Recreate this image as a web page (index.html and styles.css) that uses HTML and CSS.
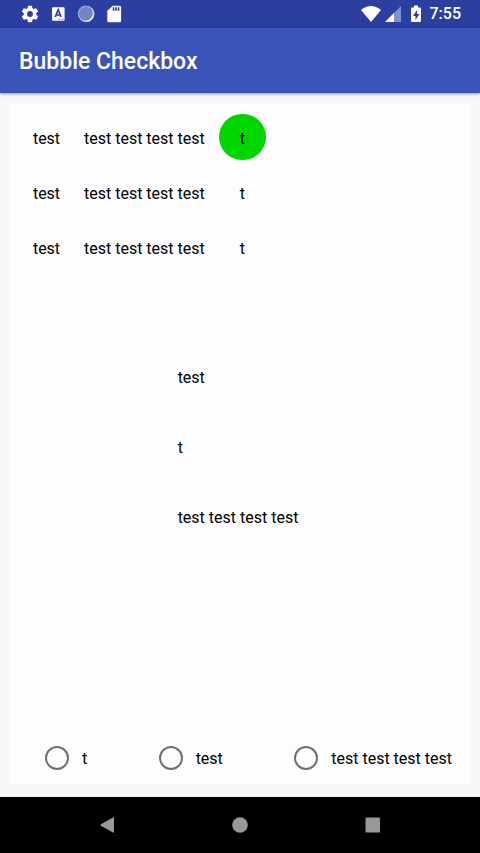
FILE: index.html
```html
<!DOCTYPE html>
<html lang="en">
<head>
<meta charset="utf-8">
<meta name="viewport" content="width=device-width, initial-scale=1">
<title>Bubble Checkbox</title>
<link rel="stylesheet" href="styles.css">
</head>
<body>
<div class="status">
  <div class="status-left">
    <svg width="20" height="20" viewBox="0 0 24 24" fill="#fff" aria-hidden="true"><path d="M19.43 12.98c.04-.32.07-.64.07-.98s-.03-.66-.07-.98l2.11-1.65c.19-.15.24-.42.12-.64l-2-3.46c-.12-.22-.39-.3-.61-.22l-2.49 1c-.52-.4-1.08-.73-1.69-.98l-.38-2.65C14.46 2.18 14.25 2 14 2h-4c-.25 0-.46.18-.49.42l-.38 2.65c-.61.25-1.17.59-1.69.98l-2.49-1c-.23-.09-.49 0-.61.22l-2 3.46c-.13.22-.07.49.12.64l2.11 1.65c-.04.32-.07.65-.07.98s.03.66.07.98l-2.11 1.65c-.19.15-.24.42-.12.64l2 3.46c.12.22.39.3.61.22l2.49-1c.52.4 1.08.73 1.69.98l.38 2.65c.03.24.24.42.49.42h4c.25 0 .46-.18.49-.42l.38-2.65c.61-.25 1.17-.59 1.69-.98l2.49 1c.23.09.49 0 .61-.22l2-3.46c.12-.22.07-.49-.12-.64l-2.11-1.65zM12 15.5a3.5 3.5 0 1 1 0-7 3.5 3.5 0 0 1 0 7z"/></svg>
    <svg width="20" height="20" viewBox="0 0 20 20" aria-hidden="true"><rect x="4" y="3.200" width="12.600" height="13.600" rx="1" fill="#fff"/><path d="M7.300 13l2.900-7.200L13.100 13M8.400 11h3.600" fill="none" stroke="#2c3e9f" stroke-width="1.700"/><path d="M10.500 15.300h5" stroke="#2c3e9f" stroke-width=".8" stroke-dasharray="1 1"/></svg>
    <svg width="20" height="20" viewBox="0 0 20 20" aria-hidden="true"><circle cx="10.300" cy="10" r="8" fill="#fff"/><circle cx="9.300" cy="9.200" r="7.600" fill="#7583c5"/><circle cx="10.300" cy="10" r="7.700" fill="none" stroke="#a9b2dd" stroke-width=".8"/></svg>
    <svg width="20" height="20" viewBox="0 0 24 24" fill="#fff" aria-hidden="true"><path d="M18.500 2h-8L4 8v12c0 1.100.9 2 2 2h12.500c1.100 0 2-.9 2-2V4c0-1.100-.9-2-2-2zm-6 6h-2V4h2v4zm3 0h-2V4h2v4zm3 0h-2V4h2v4z"/></svg>
  </div>
  <div class="status-right">
    <svg width="22" height="20" viewBox="0 0 22 20" fill="#fff" aria-hidden="true"><path d="M11 18L1 6Q11-2 21 6z"/></svg>
    <svg width="18" height="20" viewBox="0 0 18 20" aria-hidden="true"><path d="M1 18L17 2v16z" fill="#8390cb"/><path d="M1 18l9-9v9z" fill="#fff"/></svg>
    <svg class="battery" width="12" height="20" viewBox="0 0 12 20" aria-hidden="true"><path d="M4 1.500h4v2h2q1 0 1 1v12.500q0 1-1 1H2q-1 0-1-1V4.500q0-1 1-1h2z" fill="#fff"/><path d="M7 6l-4 6h2.500v4l4-6H7z" fill="#2c3e9f"/></svg>
    <span>7:55</span>
  </div>
</div>
<header class="appbar"><h1>Bubble Checkbox</h1></header>
<main class="page">
  <form class="card">
    <div class="bubbles">
      <label class="bubble"><input type="checkbox"><span>test</span></label>
      <label class="bubble"><input type="checkbox"><span>test test test test</span></label>
      <label class="bubble"><input type="checkbox" checked><span>t</span></label>
      <label class="bubble"><input type="checkbox"><span>test</span></label>
      <label class="bubble"><input type="checkbox"><span>test test test test</span></label>
      <label class="bubble"><input type="checkbox"><span>t</span></label>
      <label class="bubble"><input type="checkbox"><span>test</span></label>
      <label class="bubble"><input type="checkbox"><span>test test test test</span></label>
      <label class="bubble"><input type="checkbox"><span>t</span></label>
    </div>
    <div class="stack">
      <label class="bubble"><input type="radio" name="stack"><span>test</span></label>
      <label class="bubble"><input type="radio" name="stack"><span>t</span></label>
      <label class="bubble"><input type="radio" name="stack"><span>test test test test</span></label>
    </div>
    <div class="radios">
      <label class="radio"><input type="radio" name="choice"><span>t</span></label>
      <label class="radio"><input type="radio" name="choice"><span>test</span></label>
      <label class="radio"><input type="radio" name="choice"><span>test test test test</span></label>
    </div>
  </form>
</main>
<nav class="navbar">
  <button type="button" aria-label="Back"><svg width="16" height="16" viewBox="0 0 16 16"><path d="M15 .500v15q0 .5-1 0L1.800 8.700q-.8-.7 0-1.400L14 .500q1-.5 1 0z"/></svg></button>
  <button type="button" aria-label="Home"><svg width="16" height="16" viewBox="0 0 16 16"><circle cx="8" cy="8" r="7.800"/></svg></button>
  <button type="button" aria-label="Recent apps"><svg width="16" height="16" viewBox="0 0 16 16"><rect x=".5" y=".5" width="14.500" height="15" rx="1"/></svg></button>
</nav>
</body>
</html>
```

FILE: styles.css
```css
* {
  box-sizing: border-box;
}

body {
  margin: 0;
  min-height: 100vh;
  display: flex;
  flex-direction: column;
  background: #f8f7fa;
  color: #000;
  font: 16px/20px Roboto, sans-serif;
}

.status {
  height: 28px;
  padding: 0 19px 0 20px;
  display: flex;
  justify-content: space-between;
  align-items: center;
  background: #2c3e9f;
  color: #fff;
  font-size: 16px;
  font-weight: 500;
}

.status svg,
.navbar svg {
  display: block;
}

.status-left,
.status-right {
  display: flex;
  align-items: center;
}

.status-left {
  gap: 8px;
}

.status-right {
  gap: 2px;
}

.battery {
  margin: 0 6px;
}

.appbar {
  height: 65px;
  padding: 3px 19px 0;
  display: flex;
  align-items: center;
  background: #3a53b6;
  color: #fff;
  box-shadow: 0 1px 3px rgba(0, 0, 0, 0.4);
}

.appbar h1 {
  margin: 0;
  font-size: 23px;
  line-height: 28px;
  font-weight: 500;
}

.page {
  flex: 1;
  display: flex;
  padding: 11px 11px 13px;
}

.card {
  flex: 1;
  display: grid;
  grid-template-rows: 1fr auto 1fr;
  padding: 10px 16px 6px 12px;
  background: #fdfcff;
}

.bubbles {
  align-self: start;
  justify-self: start;
  display: grid;
  grid-template-columns: 47px auto 47px;
  gap: 9px 2px;
}

.bubble {
  position: relative;
  min-width: 47px;
  height: 46px;
  padding: 0 12px;
  display: flex;
  align-items: center;
  justify-content: center;
}

.bubble input {
  appearance: none;
  position: absolute;
  inset: 0;
  margin: 0;
  border-radius: 23px;
}

.bubble input:checked {
  background: #00d500;
}

.bubble span {
  position: relative;
  padding-top: 3px;
  white-space: nowrap;
}

.stack {
  justify-self: center;
  display: flex;
  flex-direction: column;
  align-items: flex-start;
  gap: 24px;
}

.stack .bubble {
  justify-content: flex-start;
}

.radios {
  align-self: end;
  display: flex;
  justify-content: space-between;
  padding: 0 1px 0 22px;
}

.radio {
  height: 40px;
  display: flex;
  align-items: center;
  gap: 13px;
  white-space: nowrap;
}

.radio input {
  appearance: none;
  width: 24px;
  height: 24px;
  margin: 0;
  border: 2px solid #707072;
  border-radius: 50%;
}

.radio span {
  padding-top: 2px;
}

.radio input:checked {
  background: #00d500;
}

.navbar {
  height: 56px;
  padding: 0 41px;
  display: flex;
  background: #000;
}

.navbar button {
  flex: 1;
  padding: 0;
  border: 0;
  display: flex;
  align-items: center;
  justify-content: center;
  background: none;
}

.navbar svg {
  fill: #989799;
}
```
